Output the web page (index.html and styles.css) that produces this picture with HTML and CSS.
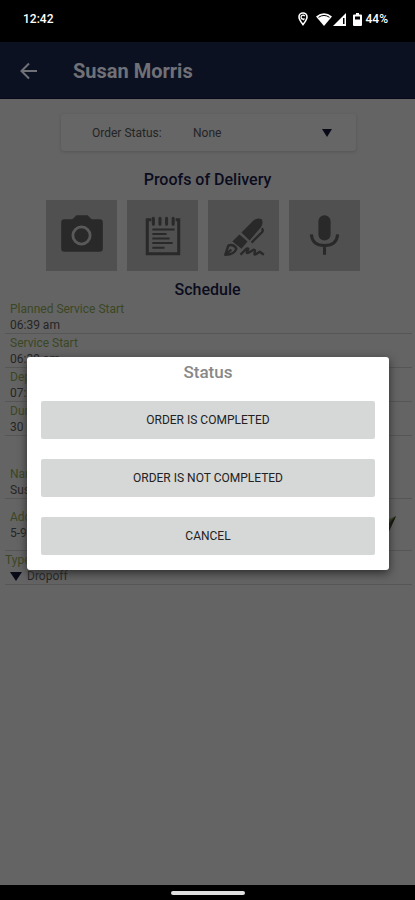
FILE: index.html
```html
<!DOCTYPE html>
<html lang="en">
<head>
<meta charset="utf-8">
<meta name="viewport" content="width=device-width, initial-scale=1">
<title>Susan Morris</title>
<link rel="stylesheet" href="styles.css">
</head>
<body>
<div class="status-bar">
  <span class="clock">12:42</span>
  <div class="indicators">
    <svg class="pin" width="10" height="14" viewBox="0 0 10 14" fill="none" stroke="#fff"><path stroke-width="1.6" d="M5 12.600C3 10 1 7.500 1 5a4 4 0 0 1 8 0C9 7.500 7 10 5 12.600Z"/><path stroke-width="1.300" d="M6.800 4.200A2 2 0 1 0 6.500 6.600L5 8"/></svg>
    <svg width="16" height="13" viewBox="0 0 16 13"><path fill="#fff" d="M8 13 0 3.500Q8-3 16 3.500Z"/><path fill="none" stroke="#000" d="M2.500 4.300Q8 .6 13.500 4.300"/></svg>
    <svg width="14" height="13" viewBox="0 0 14 13"><path fill="#fff" d="M13 0V13H0Z"/><path fill="#000" d="M10 5h1.500v6H10Z"/></svg>
    <svg class="battery" width="9" height="13" viewBox="0 0 9 13"><path fill="#fff" d="M3 0h3v1.500h2q1 0 1 1V12q0 1-1 1H1q-1 0-1-1V2.500q0-1 1-1h2Z"/><path fill="#000" d="M2 3.500h5v3H2Z"/></svg>
    <span>44%</span>
  </div>
</div>
<div class="screen">
  <header class="app-bar">
    <button class="back" aria-label="Back"><svg width="18" height="18" viewBox="0 0 18 18" fill="none" stroke="#707177" stroke-width="2"><path d="M17 9H2.500M9 1.500 1.500 9 9 16.500"/></svg></button>
    <h1>Susan Morris</h1>
  </header>
  <main>
    <div class="order-status">
      <label for="order-status">Order Status:</label>
      <select id="order-status"><option>None</option></select>
      <svg width="10" height="8" viewBox="0 0 10 8"><path fill="#090a18" d="M0 0h10L5 8Z"/></svg>
    </div>
    <h2>Proofs of Delivery</h2>
    <div class="proofs">
      <button aria-label="Photo"><svg viewBox="0 0 70 70"><path fill="#292929" d="M18 19h8l4-4h11l4 4h8q3 0 3 3v26q0 3-3 3H18q-3 0-3-3V22q0-3 3-3Z"/><circle cx="35" cy="35" r="8.500" fill="none" stroke="#595959" stroke-width="2.800"/></svg></button>
      <button aria-label="Note"><svg viewBox="0 0 70 70" fill="none" stroke="#292929"><path stroke-width="3" d="M20 19.500h31v33.500h-31Z"/><path stroke="#505050" stroke-width="6" d="M24 19h24"/><path stroke-width="3" stroke-linecap="round" d="M26 18v6M32.500 18v6M39 18v6M45.500 18v6"/><path stroke-width="2" d="M25 29h22M25 33.500h14M25 38h17M25 42.500h20M25 47h12"/></svg></button>
      <button aria-label="Signature"><svg viewBox="0 0 70 70"><path fill="#292929" d="M33 32 45 20q4-3 8-1 2 4-1 8L41 40ZM31 34l8 7-6 7-9-7Z"/><path fill="none" stroke="#292929" stroke-width="2.300" stroke-linejoin="round" d="m43 42 10-10q2-2 0-4M17 54l3-9q5-2 8 3-2 6-11 6Zm0 0 6-5M32 54l6-6q3-1 1 2t1 2l5-3q2 0 1 3t2 1l3-2 4 3"/></svg></button>
      <button aria-label="Voice recording"><svg viewBox="0 0 70 70"><rect x="29" y="15" width="12" height="25" rx="6" fill="#292929"/><path fill="none" stroke="#292929" stroke-width="3" d="M22 34q1 11 13 11t13-11M35 45v9"/></svg></button>
    </div>
    <h2 class="schedule-title">Schedule</h2>
    <dl class="details">
      <div><dt>Planned Service Start</dt><dd>06:39 am</dd></div>
      <div><dt>Service Start</dt><dd>06:39 am</dd></div>
      <div><dt>Departure</dt><dd>07:09 am</dd></div>
      <div><dt>Duration</dt><dd>30 min</dd></div>
      <div class="name"><dt>Name</dt><dd>Susan Morris</dd></div>
      <div class="address">
        <dt>Address</dt><dd>5-9</dd>
        <svg width="22" height="22" viewBox="0 0 22 22"><path fill="#354018" d="M22 0 12 22 9 13 0 10Z"/><path fill="#0d100b" d="M22 0 12 22 10 12Z"/></svg>
      </div>
      <div class="type"><dt>Type</dt><dd><svg width="12" height="9" viewBox="0 0 12 9"><path fill="#090a18" d="M0 0h12L6 9Z"/></svg>Dropoff</dd></div>
    </dl>
  </main>
  <div class="scrim">
    <section class="dialog" role="dialog" aria-modal="true" aria-labelledby="dialog-title">
      <h2 id="dialog-title">Status</h2>
      <button>ORDER IS COMPLETED</button>
      <button>ORDER IS NOT COMPLETED</button>
      <button>CANCEL</button>
    </section>
  </div>
</div>
<div class="nav-bar"><span></span></div>
</body>
</html>
```
FILE: styles.css
```css
* { box-sizing: border-box; }
body {
  margin: 0;
  min-height: 100vh;
  display: flex;
  flex-direction: column;
  background: #000;
  font-family: Roboto, sans-serif;
}
h1, h2, dl, dd { margin: 0; }
svg { display: block; flex: none; }
button { border: 0; padding: 0; font-family: inherit; }
.status-bar {
  height: 42px;
  padding: 0 27px 4px 23px;
  display: flex;
  align-items: center;
  justify-content: space-between;
  color: #fff;
  font-size: 12px;
  font-weight: 500;
}
.indicators { display: flex; align-items: center; gap: 1px; }
.pin { margin-right: 7px; }
.battery { margin: 0 3px 0 5px; }
.screen {
  position: relative;
  flex: 1;
  background: #646464;
}
.app-bar {
  height: 57px;
  display: flex;
  align-items: center;
  gap: 35px;
  padding: 2px 20px 0;
  background: #0c1122;
  border-bottom: 1px solid #070918;
}
.back { background: none; }
.app-bar h1 {
  color: #707177;
  font-size: 20px;
  line-height: 24px;
  font-weight: 700;
}
main { padding-top: 15px; }
.order-status {
  height: 37px;
  margin: 0 59px 0 61px;
  padding: 0 24px 0 31px;
  display: flex;
  align-items: center;
  border-radius: 3px;
  background: #666;
  box-shadow: 0 1px 3px #555;
  color: #242424;
  font-size: 12px;
}
.order-status label { width: 101px; }
.order-status select {
  flex: 1;
  min-width: 0;
  padding: 0;
  border: 0;
  appearance: none;
  background: none;
  color: inherit;
  font: inherit;
}
main h2 {
  color: #0b0c1e;
  font-size: 16px;
  line-height: 20px;
  font-weight: 500;
  text-align: center;
}
main > h2 { margin-top: 19px; }
.proofs {
  display: flex;
  justify-content: center;
  gap: 10px;
  margin: 10px 10px 0 0;
}
.proofs button {
  width: 71px;
  height: 71px;
  background: #505050;
}
.proofs svg { width: 100%; height: 100%; }
main .schedule-title { margin-top: 9px; }
.details { padding: 1px 3px 0 5px; font-size: 12px; line-height: 16px; }
.details > div {
  padding: 0 5px;
  margin-bottom: 1px;
  border-bottom: 1px solid #565656;
}
.details dt { color: #3b4723; }
.details dd { color: #242424; }
.details .name { margin-top: 30px; }
.details .address {
  position: relative;
  padding-top: 9px;
  padding-bottom: 9px;
}
.address svg { position: absolute; top: 16px; right: 16px; }
.details .type { padding-left: 0; }
.type dd { display: flex; align-items: center; gap: 5px; padding-left: 5px; }
.scrim {
  position: absolute;
  inset: 0;
  display: flex;
  align-items: center;
  justify-content: center;
}
.dialog {
  flex: 1;
  margin: 0 26px 0 27px;
  padding: 4px 14px 15px;
  display: flex;
  flex-direction: column;
  gap: 20px;
  border-radius: 3px;
  background: #fff;
  box-shadow: 0 3px 10px #2c2c2c;
}
.dialog h2 {
  margin-bottom: -2px;
  color: #888;
  font-size: 17px;
  line-height: 22px;
  font-weight: 500;
  text-align: center;
}
.dialog button {
  height: 38px;
  border-radius: 2px;
  background: #d6d7d7;
  color: #222;
  font-size: 12px;
}
.nav-bar {
  height: 15px;
  display: flex;
  align-items: center;
  justify-content: center;
}
.nav-bar span {
  width: 74px;
  height: 4px;
  border-radius: 2px;
  background: #e0e0e0;
}
```
